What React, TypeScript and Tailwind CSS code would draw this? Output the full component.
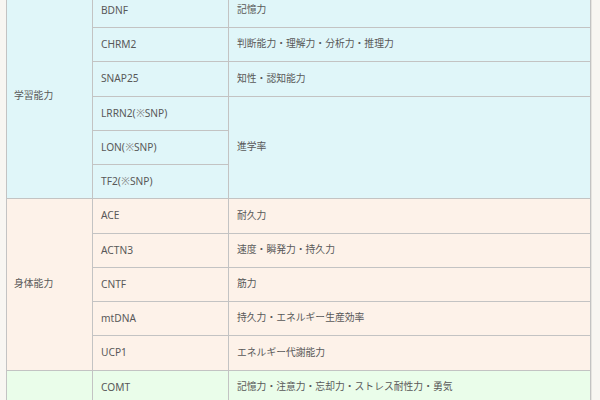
import React from 'react';

const cell = "flex items-center text-[9.8px] text-[#585858]";

const rows = {
  study: [
    ['BDNF', '記憶力'],
    ['CHRM2', '判断能力・理解力・分析力・推理力'],
    ['SNAP25', '知性・認知能力'],
    ['LRRN2', null],
    ['LON', null],
    ['TF2', null],
  ],
  body: [
    ['ACE', '耐久力'],
    ['ACTN3', '速度・瞬発力・持久力'],
    ['CNTF', '筋力'],
    ['mtDNA', '持久力・エネルギー生産効率'],
    ['UCP1', 'エネルギー代謝能力'],
  ],
};

function Snp({ name }: { name: string }) {
  return (
    <span className="text-[10.2px]">
      {name}
      <span className="tracking-[0.5px]">(</span>
      <span className="text-[#8a8a8a]">※</span>
      SNP
      <span className="tracking-[0.5px]">)</span>
    </span>
  );
}

export default function App() {
  return (
    <div
      className="w-[600px] h-[400px] overflow-hidden bg-[#f8f6f2]"
      style={{ fontFamily: '"Noto Sans", "Noto Sans CJK JP", sans-serif' }}
    >
      <div className="ml-[6px] mt-[-7.2px] w-[585px] border border-[#c3c3c3] bg-[#c3c3c3] grid grid-cols-[85px_135px_1fr] auto-rows-[33.25px] gap-px shadow-[1px_0_0_#e6e4e0]">
        {/* 学習能力 */}
        <div className={`${cell} row-span-6 bg-[#e0f6f9] pl-[7px]`}>学習能力</div>
        {rows.study.map(([gene, trait], i) => (
          <React.Fragment key={gene as string}>
            <div className={`${cell} bg-[#e0f6f9] pl-2`}>
              {trait === null ? <Snp name={gene as string} /> : <span className="text-[10.2px]">{gene}</span>}
            </div>
            {trait !== null && <div className={`${cell} bg-[#e0f6f9] pl-2`}>{trait}</div>}
            {i === 3 && <div className={`${cell} row-span-3 bg-[#e0f6f9] pl-2`}>進学率</div>}
          </React.Fragment>
        ))}

        {/* 身体能力 */}
        <div className={`${cell} row-span-5 bg-[#fdf2e9] pl-[7px]`}>身体能力</div>
        {rows.body.map(([gene, trait]) => (
          <React.Fragment key={gene}>
            <div className={`${cell} bg-[#fdf2e9] pl-2`}><span className="text-[10.2px]">{gene}</span></div>
            <div className={`${cell} bg-[#fdf2e9] pl-2`}>{trait}</div>
          </React.Fragment>
        ))}

        {/* 精神 */}
        <div className={`${cell} row-span-3 bg-[#eafdea] pl-[7px]`}></div>
        <div className={`${cell} bg-[#eafdea] pl-2`}><span className="text-[10.2px]">COMT</span></div>
        <div className={`${cell} bg-[#eafdea] pl-2`}>記憶力・注意力・忘却力・ストレス耐性力・勇気</div>
        <div className={`${cell} bg-[#eafdea] pl-2`}></div>
        <div className={`${cell} bg-[#eafdea] pl-2`}></div>
        <div className={`${cell} bg-[#eafdea] pl-2`}></div>
        <div className={`${cell} bg-[#eafdea] pl-2`}></div>
      </div>
    </div>
  );
}
